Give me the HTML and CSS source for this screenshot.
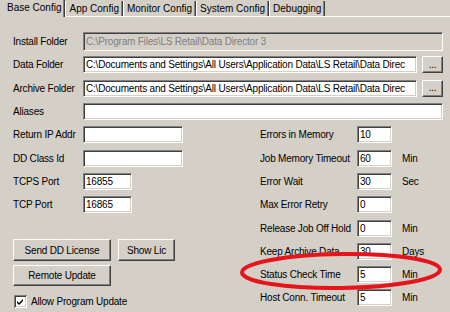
FILE: index.html
```html
<!DOCTYPE html>
<html lang="en">
<head>
  <meta charset="UTF-8">
  <title>Base Config</title>
  <link rel="stylesheet" href="styles.css">
</head>
<body>
  <div class="tabs">
    <div class="tab active">Base Config</div>
    <div class="tab">App Config</div>
    <div class="tab">Monitor Config</div>
    <div class="tab">System Config</div>
    <div class="tab">Debugging</div>
  </div>

  <div class="panel">
    <div class="row">
      <label>Install Folder</label>
      <div class="field grow disabled">C:\Program Files\LS Retail\Data Director 3</div>
    </div>
    <div class="row">
      <label>Data Folder</label>
      <div class="field grow">C:\Documents and Settings\All Users\Application Data\LS Retail\Data Direc</div>
      <div class="btn dots">...</div>
    </div>
    <div class="row">
      <label>Archive Folder</label>
      <div class="field grow">C:\Documents and Settings\All Users\Application Data\LS Retail\Data Direc</div>
      <div class="btn dots">...</div>
    </div>
    <div class="row">
      <label>Aliases</label>
      <div class="field grow"></div>
    </div>

    <div class="lower">
      <div class="left">
        <div class="row">
          <label>Return IP Addr</label>
          <div class="field ip"></div>
        </div>
        <div class="row">
          <label>DD Class Id</label>
          <div class="field ip"></div>
        </div>
        <div class="row">
          <label>TCPS Port</label>
          <div class="field port">16855</div>
        </div>
        <div class="row">
          <label>TCP Port</label>
          <div class="field port">16865</div>
        </div>

        <div class="buttons">
          <div class="btn send">Send DD License</div>
          <div class="btn show">Show Lic</div>
        </div>
        <div class="btn remote">Remote Update</div>

        <div class="check">
          <svg class="box" width="13" height="13" viewBox="0 0 13 13">
            <rect x="0" y="0" width="13" height="13" fill="#808080"/>
            <rect x="1" y="1" width="12" height="12" fill="#fff"/>
            <rect x="1" y="1" width="11" height="11" fill="#404040"/>
            <rect x="2" y="2" width="10" height="10" fill="#d4d0c8"/>
            <rect x="2" y="2" width="9" height="9" fill="#fff"/>
            <path d="M3 6l2 2 4-4v2l-4 4-2-2z" fill="#000"/>
          </svg>
          <span>Allow Program Update</span>
        </div>
      </div>

      <div class="right">
        <div class="row"><label>Errors in Memory</label><div class="field num">10</div></div>
        <div class="row"><label>Job Memory Timeout</label><div class="field num">60</div><span class="unit">Min</span></div>
        <div class="row"><label>Error Wait</label><div class="field num">30</div><span class="unit">Sec</span></div>
        <div class="row"><label>Max Error Retry</label><div class="field num">0</div></div>
        <div class="row"><label>Release Job Off Hold</label><div class="field num">0</div><span class="unit">Min</span></div>
        <div class="row"><label>Keep Archive Data</label><div class="field num">30</div><span class="unit">Days</span></div>
        <div class="row"><label>Status Check Time</label><div class="field num">5</div><span class="unit">Min</span></div>
        <div class="row"><label>Host Conn. Timeout</label><div class="field num">5</div><span class="unit">Min</span></div>
      </div>
    </div>
  </div>

  <!-- red marker drawn over the screenshot -->
  <svg class="marker" width="210" height="46" viewBox="0 0 210 46">
    <ellipse cx="102" cy="22" rx="99" ry="17" fill="none" stroke="#e8141c" stroke-width="4" transform="rotate(-0.8 102 22)"/>
  </svg>
</body>
</html>
```

FILE: styles.css
```css
body {
  margin: 0;
  background: #d4d0c8;
  font-family: 'Liberation Sans', Arial, sans-serif;
  font-size: 10px;
  letter-spacing: -0.2px;
  color: #000;
  position: relative;
  height: 312px;
  overflow: hidden;
}

.tabs {
  display: flex;
  height: 16px;
  border-bottom: 1px solid #fff;
  letter-spacing: 0;
}

.tab {
  padding: 0 3px;
  line-height: 15px;
  margin-top: 1px;
  border-left: 1px solid #fff;
  border-right: 1px solid #404040;
  box-shadow: inset -1px 0 #808080;
}

.tab.active {
  margin-top: 0;
  margin-bottom: -1px;
  padding: 0 3px 0 7px;
  line-height: 16px;
  background: #d4d0c8;
  border-left: none;
}

.panel {
  padding: 13px 7px 0 13px;
}

.row {
  display: flex;
  align-items: center;
  height: 23.3px;
}

.row label {
  width: 70px;
  flex: none;
}

.field {
  box-sizing: border-box;
  height: 17px;
  padding: 0 2px;
  line-height: 15px;
  background: #fff;
  border: 1px solid;
  border-color: #808080 #fff #fff #808080;
  box-shadow: inset 1px 1px #404040, inset -1px -1px #d4d0c8;
  white-space: nowrap;
  overflow: hidden;
}

.field.grow {
  flex: 1;
  min-width: 0;
}

.field.disabled {
  height: 19px;
  line-height: 17px;
  background: #d4d0c8;
  color: #808080;
}

.field.ip {
  width: 100px;
}

.field.port {
  width: 49px;
}

.btn {
  box-sizing: border-box;
  display: flex;
  align-items: center;
  justify-content: center;
  background: #d4d0c8;
  border: 1px solid;
  border-color: #fff #404040 #404040 #fff;
  box-shadow: inset -1px -1px #808080;
}

.btn.dots {
  width: 21px;
  height: 17px;
  margin-left: 5px;
  line-height: 10px;
}

.lower {
  display: flex;
}

.left {
  width: 247px;
  flex: none;
}

.right .row label {
  width: 97px;
}

.field.num {
  width: 35px;
}

.unit {
  margin-left: 10px;
}

.buttons {
  display: flex;
  gap: 7px;
  margin-top: 23px;
}

.btn.send {
  width: 98px;
  height: 22px;
}

.btn.show {
  width: 57px;
  height: 22px;
}

.btn.remote {
  width: 98px;
  height: 21px;
  margin-top: 4px;
}

.check {
  display: flex;
  align-items: center;
  gap: 4px;
  margin-top: 9px;
  padding-left: 1px;
}

.check .box {
  display: block;
}

.marker {
  position: absolute;
  left: 239px;
  top: 249px;
}
```
